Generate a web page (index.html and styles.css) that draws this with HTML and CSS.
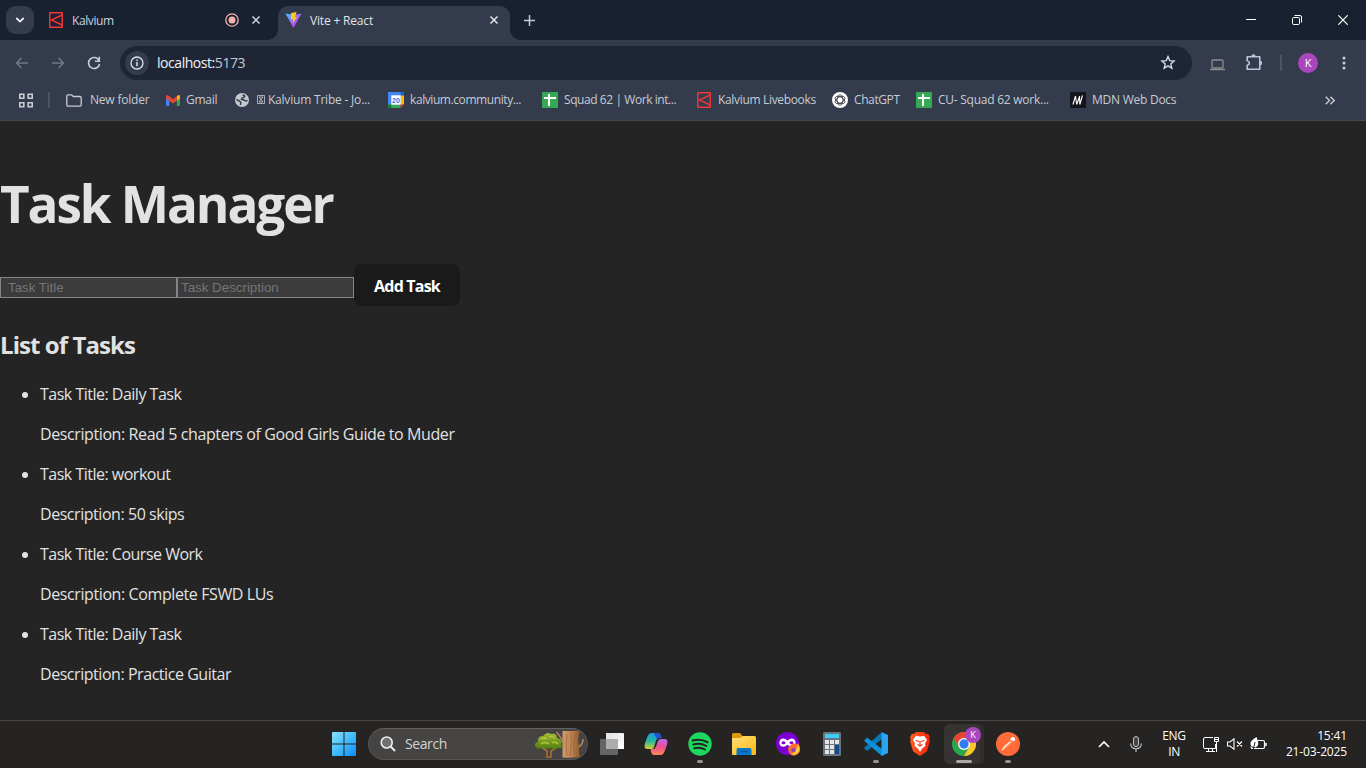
FILE: index.html
```html
<!DOCTYPE html>
<html lang="en">
<head>
<meta charset="utf-8">
<title>Vite + React</title>
<link rel="stylesheet" href="styles.css">
</head>
<body>
<svg class="defs" width="0" height="0">
  <defs>
    <linearGradient id="win" x1="0" y1="0" x2="1" y2="1"><stop offset="0" stop-color="#8be1ff"/><stop offset=".5" stop-color="#42bdfb"/><stop offset="1" stop-color="#0c8bfa"/></linearGradient>
    <linearGradient id="viteBody" x1="0" y1="0" x2="1" y2="1"><stop offset="0" stop-color="#41d1ff"/><stop offset=".6" stop-color="#a855f7"/><stop offset="1" stop-color="#bd34fe"/></linearGradient>
    <linearGradient id="copA" x1="0" y1="0" x2="0" y2="1"><stop offset="0" stop-color="#1b9de8"/><stop offset=".5" stop-color="#25b6a0"/><stop offset="1" stop-color="#d8cf2b"/></linearGradient>
    <linearGradient id="copB" x1="0" y1="0" x2="0" y2="1"><stop offset="0" stop-color="#b36bf0"/><stop offset=".5" stop-color="#ee4f8e"/><stop offset="1" stop-color="#fb8a54"/></linearGradient>
    <linearGradient id="folder" x1="0" y1="0" x2="1" y2="1"><stop offset="0" stop-color="#ffdf78"/><stop offset="1" stop-color="#fcb716"/></linearGradient>
    <linearGradient id="brave" x1="0" y1="0" x2="1" y2="0"><stop offset="0" stop-color="#ff5a22"/><stop offset="1" stop-color="#f5250c"/></linearGradient>
    <linearGradient id="trunk" x1="0" y1="0" x2="1" y2="0"><stop offset="0" stop-color="#cf9a69"/><stop offset=".5" stop-color="#bf8452"/><stop offset="1" stop-color="#8f5a2c"/></linearGradient>
    <linearGradient id="leaf" x1="0" y1="0" x2="0" y2="1"><stop offset="0" stop-color="#a5bd33"/><stop offset="1" stop-color="#4c7a10"/></linearGradient>
    <linearGradient id="glass" x1="0" y1="0" x2="1" y2="1"><stop offset="0" stop-color="#e4e4e4"/><stop offset="1" stop-color="#fff"/></linearGradient>
    <symbol id="kalvium" viewBox="0 0 14 16"><path d="M.8.8h12.4v14.4H.8z" fill="none" stroke="#ee3539" stroke-width="1.500"/><path d="M13 3 2.500 8 13 13" fill="none" stroke="#ee3539" stroke-width="1.500"/></symbol>
    <symbol id="sheet" viewBox="0 0 16 16"><rect width="16" height="16" rx="1" fill="#34a853"/><path d="M2 6h12M7 2v12" stroke="#fff" stroke-width="2"/></symbol>
    <symbol id="close" viewBox="0 0 10 10"><path d="M1.500 1.500l7 7M8.500 1.500l-7 7" fill="none" stroke="currentColor" stroke-width="1.500"/></symbol>
  </defs>
</svg>

<div class="browser">
  <header class="tabstrip">
    <button class="tab-search"><svg width="10" height="6" viewBox="0 0 10 6"><path d="M1.300 1 5 4.600 8.700 1" fill="none" stroke="#eef1f6" stroke-width="1.800"/></svg></button>
    <div class="tab idle">
      <svg width="14" height="16"><use href="#kalvium"/></svg>
      <span class="tab-title">Kalvium</span>
      <svg class="rec" width="14" height="14" viewBox="0 0 14 14"><circle cx="7" cy="7" r="6.200" fill="none" stroke="#f7b2ad" stroke-width="1.300"/><circle cx="7" cy="7" r="3.500" fill="#f7b2ad"/></svg>
      <svg class="x" width="10" height="10"><use href="#close"/></svg>
    </div>
    <div class="tab active">
      <svg width="17" height="16" viewBox="0 0 17 16"><path d="M.5 1.500 8.500 16l8-14.500L8.500 3z" fill="url(#viteBody)"/><path d="M11.500 0 6 1v6.500l2.300-.4-.8 4.400L12.300 5l-2.300.3z" fill="#ffc921"/></svg>
      <span class="tab-title">Vite + React</span>
      <svg class="x" width="10" height="10"><use href="#close"/></svg>
    </div>
    <svg class="plus" width="11" height="11" viewBox="0 0 11 11"><path d="M5.500 0v11M0 5.500h11" stroke="#c4cbd9" stroke-width="1.500"/></svg>
    <div class="window-buttons">
      <svg width="10" height="10" viewBox="0 0 10 10"><path d="M0 4.500h10" stroke="#fff"/></svg>
      <svg width="10" height="10" viewBox="0 0 10 10"><rect x=".5" y="2.500" width="7" height="7" rx="1.200" fill="none" stroke="#fff"/><path d="M2.500.5H8a1.500 1.500 0 0 1 1.500 1.500v5.500" fill="none" stroke="#fff"/></svg>
      <svg width="10" height="10" viewBox="0 0 10 10"><path d="M.3.3l9.400 9.400M9.700.3.3 9.700" stroke="#fff" stroke-width="1.200"/></svg>
    </div>
  </header>

  <div class="toolbar">
    <div class="nav">
      <svg width="14" height="12" viewBox="0 0 14 12"><path d="M13 6H1.500M6.500 1l-5 5 5 5" fill="none" stroke="#717887" stroke-width="1.500"/></svg>
      <svg width="14" height="12" viewBox="0 0 14 12"><path d="M1 6h11.500M7.500 1l5 5-5 5" fill="none" stroke="#717887" stroke-width="1.500"/></svg>
      <svg width="14" height="14" viewBox="0 0 14 14"><path d="M12 4.500A5.500 5.500 0 1 0 12.500 8M12.300.8v4.400H8" fill="none" stroke="#c7d0e0" stroke-width="1.600"/></svg>
    </div>
    <div class="address">
      <span class="info"><svg width="14" height="14" viewBox="0 0 14 14"><circle cx="7" cy="7" r="6" fill="none" stroke="#dbe2ed" stroke-width="1.300"/><path d="M7 6v4.300M7 3.500v1.500" stroke="#dbe2ed" stroke-width="1.500"/></svg></span>
      <span class="url">localhost:<span>5173</span></span>
      <svg class="star" width="16" height="15" viewBox="0 0 16 15"><path d="M8 1.600l1.700 4 4.400.4-3.300 2.900 1 4.300L8 10.900l-3.800 2.300 1-4.300L1.900 6l4.400-.4z" fill="none" stroke="#d3d8e0" stroke-width="1.400"/></svg>
    </div>
    <div class="actions">
      <svg class="laptop" width="15" height="12" viewBox="0 0 15 12"><rect x="2" y="1" width="11" height="8" rx="1" fill="none" stroke="#8d8d8d" stroke-width="1.300"/><path d="M0 10.500h15" stroke="#8d8d8d" stroke-width="1.500"/></svg>
      <svg class="puzzle" width="17" height="17" viewBox="0 0 17 17"><path d="M1.200 2.700h12.600v12.600H1.200v-4q2.200-.6 2.200-2.300T1.200 6.700z" fill="none" stroke="#b9c7dc" stroke-width="1.600" stroke-linejoin="round"/><path d="M5.300 2.500a2.200 2.200 0 0 1 4.400 0zM14 6.800a2.200 2.200 0 0 1 0 4.400z" fill="#b9c7dc"/></svg>
      <span class="bar"></span>
      <span class="avatar">K</span>
      <svg class="dots" width="4" height="14" viewBox="0 0 4 14"><g fill="#c7d0e0"><circle cx="2" cy="2" r="1.500"/><circle cx="2" cy="7" r="1.500"/><circle cx="2" cy="12" r="1.500"/></g></svg>
    </div>
  </div>

  <nav class="bookmarks">
    <svg width="16" height="15" viewBox="0 0 16 15"><path d="M1.800 1.300h4v4h-4zM10.200 1.300h4v4h-4zM1.800 9.700h4v4h-4zM10.200 9.700h4v4h-4z" fill="none" stroke="#c8ccd2" stroke-width="1.600"/></svg>
    <span class="bar"></span>
    <div class="links">
      <a class="wide"><svg width="16" height="13" viewBox="0 0 16 13"><path d="M.8 2q0-1.200 1.200-1.200h3.600l1.700 1.700h6.500q1.400 0 1.400 1.300v7q0 1.300-1.300 1.300H2.100Q.8 12.100.8 10.800z" fill="none" stroke="#c8ccd2" stroke-width="1.300"/></svg><span>New folder</span></a>
      <a><svg width="14" height="11" viewBox="0 0 14 11"><path d="M0 2v7.500Q0 11 1.300 11H3.200V4z" fill="#4285f4"/><path d="M14 2v7.500q0 1.500-1.300 1.500h-1.900V4z" fill="#34a853"/><path d="M10.800 1.200 12 .3q2-1 2 1.500v1.500l-3.200 2.500z" fill="#fbbc04"/><path d="M0 1.800Q0-.6 2 .3l5 4 5-4-1.200 1v4.500L7 8.500 3.200 5.700 0 3.300z" fill="#ea4335"/></svg><span>Gmail</span></a>
      <a class="globe"><svg width="14" height="14" viewBox="0 0 14 14"><circle cx="7" cy="7" r="7" fill="#c5c8cc"/><path d="M7.500 2q2 0 2.300 1.200L8.500 4.500 7 5l-.5 1.500L9 7l1.500 1 2-.5M1.500 6.500l3 1.500 1.300 1.500-.3 2.500" fill="none" stroke="#333b4c" stroke-width="1.500"/></svg><span><svg class="mini" width="8" height="9" viewBox="0 0 8 9"><path d="M.5.5h7v8h-7zM2 2l4 5M6 2 2 7M2 2h4M2 7h4" fill="none" stroke="#c8ccd2" stroke-width=".8"/></svg> Kalvium Tribe - Jo...</span></a>
      <a class="community"><svg width="16" height="16" viewBox="0 0 16 16"><path d="M0 0h13v13H0z" fill="#4285f4"/><path d="M12.500 0H15q1 0 1 1v2.500h-3.500z" fill="#1967d2"/><path d="M12.500 3.500H16v9h-3.500z" fill="#fbbc04"/><path d="M0 12.500h12.500V16H1q-1 0-1-1z" fill="#34a853"/><path d="M0 12.500h3.500V16H1q-1 0-1-1z" fill="#188038"/><path d="M12.500 16 16 12.500h-3.500z" fill="#ea4335"/><path d="M3.300 3.300h9.400v9.400H3.300z" fill="#fff"/><text class="cal" x="8" y="10.700" text-anchor="middle">20</text></svg><span>kalvium.community...</span></a>
      <a class="squad"><svg width="16" height="16"><use href="#sheet"/></svg><span>Squad 62 | Work int...</span></a>
      <a class="livebooks"><svg width="14" height="16"><use href="#kalvium"/></svg><span>Kalvium Livebooks</span></a>
      <a class="gpt"><svg width="16" height="16" viewBox="0 0 16 16"><circle cx="8" cy="8" r="8" fill="#fff"/><g fill="none" stroke="#303038" stroke-width=".8"><ellipse cx="8" cy="8" rx="3" ry="5.300"/><ellipse cx="8" cy="8" rx="3" ry="5.300" transform="rotate(60 8 8)"/><ellipse cx="8" cy="8" rx="3" ry="5.300" transform="rotate(120 8 8)"/></g></svg><span>ChatGPT</span></a>
      <a><svg width="16" height="16"><use href="#sheet"/></svg><span>CU- Squad 62 work...</span></a>
      <a><svg width="16" height="16" viewBox="0 0 16 16"><path d="M0 0h16v16H0z" fill="#15141a"/><path d="M3 12.500 5.500 4M5.500 4l1.200 8.500M6.700 12.500 9.700 4M9.500 4l.3 8.500M9.800 12.500 12.500 3.500" fill="none" stroke="#fff" stroke-width="1.100"/></svg><span>MDN Web Docs</span></a>
    </div>
    <svg class="more" width="10" height="9" viewBox="0 0 10 9"><path d="M.7.7l3.800 3.800L.7 8.300M5.400.7l3.800 3.800-3.800 3.800" fill="none" stroke="#c8ccd2" stroke-width="1.400"/></svg>
  </nav>
</div>

<main class="page">
  <h1>Task Manager</h1>
  <form class="task-form">
    <input class="title-input" placeholder="Task Title"><input placeholder="Task Description"><button type="button">Add Task</button>
  </form>
  <h2>List of Tasks</h2>
  <ul class="tasks">
    <li>Task Title: Daily Task<p class="long">Description: Read 5 chapters of Good Girls Guide to Muder</p></li>
    <li>Task Title: workout<p>Description: 50 skips</p></li>
    <li>Task Title: Course Work<p class="long">Description: Complete FSWD LUs</p></li>
    <li>Task Title: Daily Task<p>Description: Practice Guitar</p></li>
  </ul>
</main>

<footer class="taskbar">
  <div class="app"><svg width="24" height="24" viewBox="0 0 24 24"><path d="M0 1q0-1 1-1h10.500v11.500H0zM12.500 0H23q1 0 1 1v10.500H12.500zM0 12.500h11.500V24H1q-1 0-1-1zM12.500 12.500H24V23q0 1-1 1H12.500z" fill="url(#win)"/></svg></div>
  <div class="search">
    <svg width="16" height="16" viewBox="0 0 16 16"><circle cx="6.700" cy="6.500" r="5.500" fill="#73716f" stroke="#e8ebef" stroke-width="1.600"/><path d="M10.700 10.500l4.300 4.500" stroke="#e8ebef" stroke-width="1.900"/></svg>
    <span>Search</span>
    <svg class="trees" width="50" height="27" viewBox="0 0 50 27"><path d="M28.500 0H46q-3 8-1 14-.5 7 1 12-9 1-17.500.5z" fill="url(#trunk)"/><path d="M29.500 12Q27 6 22.500 1M45 16q4-3 4-8" fill="none" stroke="#a98765" stroke-width="1.600"/><path d="M33 3q-2 12 0 22M37 1q1 9-1 24M42 3q-4 9-1 21" fill="none" stroke="#8c5c32" stroke-width=".6"/><path d="M6 15l7 5v6h4v-6l8-5" fill="none" stroke="#a9702f" stroke-width="1.600"/><path d="M3 17q-5-4 1-6-1-6 5-6 4-5 8-2 6-1 6 4 7 2 4 6 3 5-4 4-3 3-6 0-5 2-8-1-4 3-6 1z" fill="url(#leaf)"/><path d="M7 8q3-2 6 0M15 6q4-2 6 2M7 13q4-3 8 0M18 12q3-2 6 1" fill="none" stroke="#bcc840" stroke-width="1.300"/></svg>
  </div>
  <div class="app"><svg width="24" height="22" viewBox="0 0 24 22"><path d="M6 0h17q1 0 1 1v15H6z" fill="url(#glass)"/><rect y="6" width="18" height="16" rx="1" fill="#6a6a6a" opacity=".93"/><path d="M6 6h12v10H6z" fill="#adadad"/></svg></div>
  <div class="app"><svg width="24" height="22" viewBox="0 0 24 22"><path d="M4 2.500Q5 0 7.500 0H14q2 0 2.700 2.200L17.500 5H15q-2 0-2.700 2L10 14q-.7 2-2.500 2H3.500Q0 16 .6 12.500 1 9 4 2.500z" fill="url(#copA)"/><path d="M9.500 0H14q2 0 2.700 2.200L17.500 5H15q-1.300 0-2 1z" fill="#2450d3"/><path d="M20 19.500Q19 22 16.500 22H10q-2 0-2.700-2.200L6.500 16H9q2 0 2.700-2L14 8q.7-2 2.500-2h4Q24 6 23.400 9.500 23 13 20 19.500z" fill="url(#copB)"/></svg></div>
  <div class="app running"><svg width="24" height="24" viewBox="0 0 24 24"><circle cx="12" cy="12" r="11.700" fill="#1ed760"/><path d="M4.500 8.500q8-2.300 15 1.700M5.300 12.500q7-2 13 1.500M6.200 16.200q6-1.500 10.800 1.300" fill="none" stroke="#202421" stroke-width="2" stroke-linecap="round"/></svg></div>
  <div class="app"><svg width="24" height="22" viewBox="0 0 24 22"><path d="M0 1.500Q0 0 1.500 0H8l2.500 3H23v7H0z" fill="#dc9a08"/><path d="M0 5h8l3-2h11.500Q24 3 24 4.500V21q0 1-1 1H1q-1 0-1-1z" fill="url(#folder)"/><path d="M4.500 22v-5q0-2 2-2h11q2 0 2 2v5z" fill="#0878cc"/><path d="M8.500 18.500h7" stroke="#075694" stroke-width="1.500"/></svg></div>
  <div class="app"><svg width="24" height="24" viewBox="0 0 24 24"><circle cx="11.500" cy="11.500" r="11.500" fill="#7d00d3"/><path d="M11.500 8.500Q8 5.300 4.700 7.300 2 11 4.700 14 8 16 11.500 12.800 15 16 18.300 14 21 11 18.300 7.300 15 5.300 11.500 8.500z" fill="#fff"/><ellipse cx="7.500" cy="10.800" rx="2" ry="1.500" fill="#7d00d3"/><ellipse cx="15.500" cy="10.800" rx="2" ry="1.500" fill="#7d00d3"/><path d="M13 14q3-1 4-3 4 2 5 0 4 6 1 10-5 5-9 1-3-4-1-8z" fill="#fb6b32"/><path d="M22 12q3 6 0 9-3 3-7 1 5-1 7-10z" fill="#ffcc3b"/><circle cx="17.500" cy="18" r="2.200" fill="#8e46b7"/></svg></div>
  <div class="app"><svg width="18" height="24" viewBox="0 0 18 24"><rect width="18" height="24" rx="1.500" fill="#68737f"/><path d="M2 2h14v4H2z" fill="#3ccdf4"/><path d="M2 8h4v4H2zM7 8h4v4H7zM12 8h4v4h-4zM2 13h4v4H2zM7 13h4v4H7zM2 18h4v4H2zM7 18h4v4H7z" fill="#e1e5e8"/><path d="M12 13h4v9h-4z" fill="#104b91"/></svg></div>
  <div class="app running"><svg width="24" height="24" viewBox="0 0 24 24"><path d="M18 0 18 7 3 19 .3 16.500V15.500z" fill="#0877b9"/><path d="M.3 8.500 3 5.500 18 17v7L.3 9z" fill="#0f8fd8"/><path d="M17.500 0 24 3v18l-6.500 3z" fill="#2ca5f1"/></svg></div>
  <div class="app"><svg width="20" height="24" viewBox="0 0 20 24"><path d="M6 0h8l2 2 2-.2L20 5l-.7 2 .5 3-3 9.500L10 24l-6.800-4.500L.2 10l.5-3L0 5l2-3.200L4 2z" fill="url(#brave)"/><path d="M10 4.500l4-.8 3 4-2 4 .5 2-3.500 3L10 20l-2-3.300-3.500-3 .5-2-2-4 3-4z" fill="#fff"/><path d="M5.500 8.500 9 9.500M14.500 8.500 11 9.500M10 9v5M7.500 12.500 10 14l2.500-1.500" fill="none" stroke="#f83e18" stroke-width="1.200"/></svg></div>
  <div class="app chrome-app"><svg width="24" height="24" viewBox="0 0 24 24"><circle cx="12" cy="12" r="12" fill="#29a84e"/><path d="M12 12V6h10.400A12 12 0 0 1 12 24l5.200-9z" fill="#fcc52b"/><path d="M1.600 6A12 12 0 0 1 22.400 6H12v6l-5.200 3z" fill="#e64535"/><circle cx="12" cy="12" r="6" fill="#fff"/><circle cx="12" cy="12" r="4.700" fill="#317cf1"/></svg><span class="badge">K</span></div>
  <div class="app running"><svg width="24" height="24" viewBox="0 0 24 24"><circle cx="12" cy="12" r="12" fill="#ff6c37"/><path d="M5 19l3-4.500L14 9l1.500 1.500-6 5.500z" fill="#fff"/><circle cx="16.800" cy="7.300" r="2.300" fill="#fff"/><path d="M8 16.500l7-6.500M15.500 8.500l2 .5" stroke="#ff6c37" stroke-width=".8"/></svg></div>

  <div class="tray">
    <svg width="12" height="8" viewBox="0 0 12 8"><path d="M1 7l5-5 5 5" fill="none" stroke="#fff" stroke-width="1.600"/></svg>
    <svg class="mic" width="12" height="16" viewBox="0 0 12 16"><rect x="3.500" y=".6" width="5" height="10" rx="2.500" fill="#464442" stroke="#c8c8c8"/><path d="M.7 7.500q0 5.200 5.300 5.200t5.300-5.200M6 12.700V16" fill="none" stroke="#c8c8c8" stroke-width="1.100"/></svg>
    <div class="lang">ENG<br>IN</div>
    <div class="status">
      <svg width="17" height="17" viewBox="0 0 17 17"><path d="M10 1.500H2Q.5 1.500.5 3v8.500q0 1 1.500 1h10.500V8M5.500 12.500V16m4-3.500V16M3 15.500h9" fill="none" stroke="#fff"/><path d="M11.500 1.500h4v4h-4zM13.500 5.500V16M11.500 3.500h4" fill="none" stroke="#fff"/></svg>
      <svg width="16" height="12" viewBox="0 0 16 12"><path d="M.5 4v4h2.500l4 3.200V.8L3 4zM10 3.500l5 5M15 3.500l-5 5" fill="none" stroke="#fff" stroke-width="1.100"/></svg>
      <svg width="17" height="14" viewBox="0 0 17 14"><path d="M8 3.500h5q1.500 0 1.500 1.500v5q0 1.500-1.500 1.500H3Q1 11.500 1 9.500" fill="none" stroke="#fff" stroke-width="1.200"/><path d="M16 6v3" stroke="#fff" stroke-width="1.500"/><path d="M6.500 0q4 9-1 10.500Q0 10 .5 5.500 1.500 3 6.500 0z" fill="#fff"/><path d="M5 5 3.500 12" stroke="#262423"/></svg>
    </div>
    <div class="clock"><span class="time">15:41</span><br>21-03-2025</div>
  </div>
</footer>
</body>
</html>
```
FILE: styles.css
```css
* { box-sizing: border-box; }
html, body { height: 100%; }
body {
  margin: 0;
  display: flex;
  flex-direction: column;
  overflow: hidden;
  background: #242424;
  color: #e2e2e2;
  font-family: "Open Sans", "Noto Sans", sans-serif;
}
svg { display: block; flex: none; }
.defs { position: absolute; }
button { border: 0; padding: 0; }

.browser { flex: none; height: 121px; background: #333b4c; border-bottom: 1px solid #454647; }

/* Tab strip */
.tabstrip { height: 40px; display: flex; align-items: flex-end; background: #182130; padding-left: 6px; }
.tab-search { width: 28px; height: 28px; margin-bottom: 6px; border-radius: 9px; background: #333b4c; display: flex; align-items: center; justify-content: center; }
.tab { height: 34px; display: flex; align-items: center; padding-bottom: 6px; font-size: 12px; letter-spacing: -0.18px; white-space: nowrap; }
.tab-title { margin-left: 8px; flex: 1; }
.idle { width: 244px; padding-left: 15px; color: #c8d2e2; }
.idle .tab-title { margin-left: 9px; letter-spacing: -0.4px; }
.idle .rec { margin-right: 12px; }
.idle .x { color: #d0d7e3; margin-right: 17px; }
.active { position: relative; width: 232px; padding-left: 7px; background: #333b4c; border-radius: 10px 10px 0 0; color: #e1e4e9; }
.active .x { margin-right: 11px; }
.active::before, .active::after { content: ""; position: absolute; bottom: 0; width: 10px; height: 10px; }
.active::before { left: -10px; background: radial-gradient(circle at 0 0, #182130 9.500px, #333b4c 10px); }
.active::after { right: -10px; background: radial-gradient(circle at 100% 0, #182130 9.500px, #333b4c 10px); }
.plus { margin: 0 0 14px 14px; }
.window-buttons { margin-left: auto; display: flex; gap: 36px; padding: 0 18px 15px 0; }

/* Toolbar */
.toolbar { height: 46px; display: flex; align-items: center; }
.nav { width: 120px; display: flex; align-items: center; gap: 22px; padding-left: 15px; }
.address { width: 1072px; height: 34px; border-radius: 17px; background: #1e2636; display: flex; align-items: center; padding: 0 16px 0 5px; }
.info { width: 24px; height: 24px; border-radius: 50%; background: #333b4c; display: flex; align-items: center; justify-content: center; }
.url { flex: 1; margin-left: 8px; padding-bottom: 1px; font-size: 14px; letter-spacing: -0.45px; color: #f0f2f5; }
.url span { color: #c2c9d5; }
.star { margin-bottom: 1px; }
.actions { display: flex; align-items: center; }
.laptop { margin: 3px 0 0 18px; }
.puzzle { margin-left: 21px; margin-top: -2px; }
.bar { width: 2px; height: 16px; background: #4c5463; }
.actions .bar { margin-left: 17px; }
.avatar { margin-left: 16px; width: 20px; height: 20px; border-radius: 50%; background: #ab47bc; color: #fff; font-size: 11px; line-height: 20px; text-align: center; }
.dots { margin-left: 24px; }

/* Bookmarks */
.bookmarks { height: 28px; display: flex; align-items: center; padding-left: 18px; font-size: 12px; letter-spacing: -0.25px; color: #c8ccd2; }
.bookmarks > .bar { margin: 0 16px 0 14px; }
.links { display: grid; grid-template-columns: 100px 69px 153px 154px 155px 135px 84px 154px 255px; }
.links a { display: flex; align-items: center; gap: 6px; white-space: nowrap; }
.links a > span { padding-bottom: 1px; }
.links a.wide, .links a.globe { gap: 8px; }
.links a.wide, .links a.globe { letter-spacing: -0.2px; }
.links a.community { letter-spacing: -0.42px; }
.links a.squad { letter-spacing: -0.43px; }
.links a.livebooks { gap: 7px; letter-spacing: -0.33px; }
.links a.gpt { letter-spacing: -0.4px; }
.mini { display: inline-block; }
.cal { font: bold 7px "Liberation Sans", sans-serif; fill: #1a73e8; letter-spacing: 0; }

/* Page */
.page { flex: 1; padding-top: 22px; font-size: 16px; line-height: 24px; }
h1 { margin: 32px 0 0; font-size: 51.2px; line-height: 56px; letter-spacing: -2.05px; }
.task-form { display: flex; margin-top: 33px; align-items: center; height: 42px; }
.task-form input { width: 177px; height: 21px; margin-top: 5px; padding: 1px 3px; border: 1px solid #858585; background: #3b3b3b; font: 13.333px "Liberation Sans", Arial, sans-serif; border-radius: 0; }
.task-form .title-input { padding-left: 7px; }
.task-form input::placeholder { color: #757575; }
.task-form button { width: 106px; height: 42px; padding-top: 2px; border-radius: 8px; background: #1a1a1a; color: #fff; font: 700 16px "Open Sans", sans-serif; letter-spacing: -0.8px; }
h2 { margin: 21px 0 0; font-size: 24px; line-height: 36px; letter-spacing: -0.93px; }
.tasks { margin: 19px 0 0; padding-left: 40px; letter-spacing: -0.5px; }
.tasks li { height: 80px; }
.tasks p { margin: 16px 0; letter-spacing: -0.45px; }
.tasks p.long { letter-spacing: -0.4px; }

/* Taskbar */
.taskbar { flex: none; height: 48px; display: flex; align-items: center; background: #262423; border-top: 1px solid #494746; padding: 0 0 1px 322px; }
.app { position: relative; width: 44px; height: 40px; display: flex; align-items: center; justify-content: center; }
.running::after { content: ""; position: absolute; bottom: 1px; left: 19px; width: 6px; height: 3px; border-radius: 2px; background: #969492; }
.search { width: 220px; height: 32px; margin: 0 2px; border-radius: 16px; display: flex; align-items: center; background: #454443; border: 1px solid #555453; border-top-color: #646361; padding: 0 3px 0 11px; font-size: 14px; letter-spacing: -0.4px; color: #d4d3d2; }
.search span { flex: 1; margin-left: 9px; padding-bottom: 1px; }
.chrome-app { width: 40px; margin: 0 2px; border-radius: 5px; background: #363433; box-shadow: inset -4px 0 #302e2d; }
.chrome-app::after { content: ""; position: absolute; bottom: 1px; left: 12px; width: 16px; height: 3px; border-radius: 2px; background: #aaa8a6; }
.badge { position: absolute; left: 21px; top: 3px; width: 16px; height: 16px; border-radius: 50%; background: #ab47bc; color: #fff; font-size: 9px; line-height: 16px; text-align: center; }
.tray { margin-left: auto; display: flex; align-items: center; padding-right: 19px; font-size: 12px; line-height: 16px; letter-spacing: -0.35px; color: #fff; }
.mic { margin-left: 20px; }
.lang { width: 30px; margin-left: 17px; text-align: center; }
.status { display: flex; align-items: center; gap: 7px; margin-left: 14px; }
.clock { width: 80px; text-align: right; white-space: nowrap; letter-spacing: -0.15px; }
```
